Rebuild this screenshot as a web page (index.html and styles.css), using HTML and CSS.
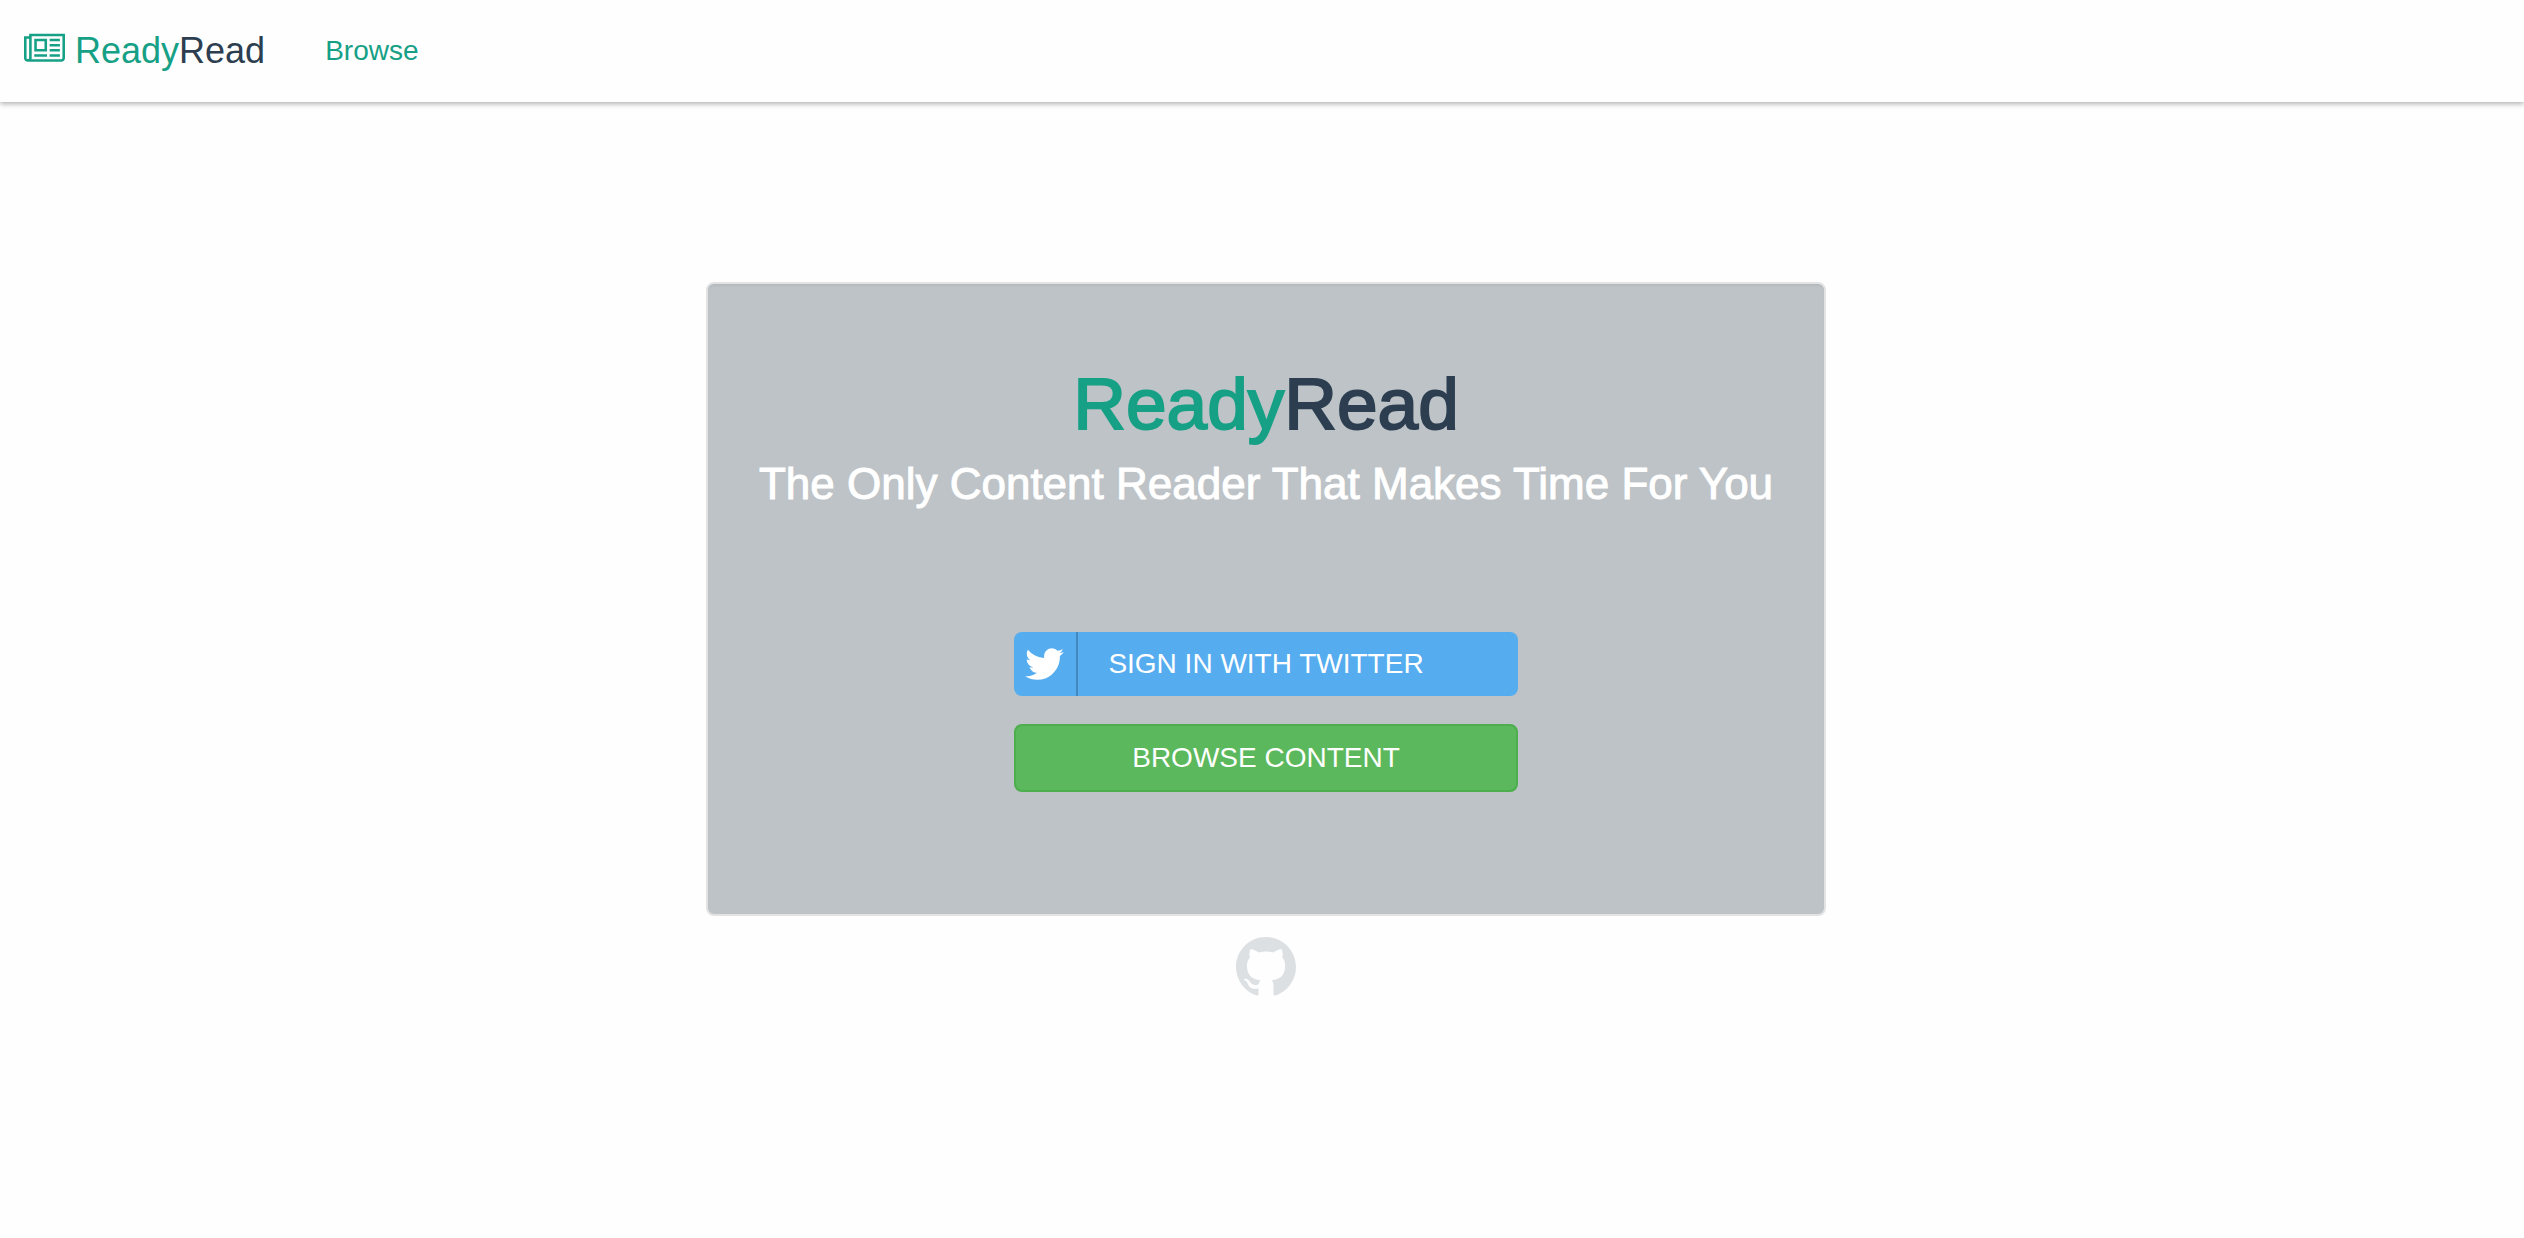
FILE: index.html
```html
<!DOCTYPE html>
<html lang="en">
<head>
<meta charset="utf-8">
<meta name="viewport" content="width=device-width, initial-scale=1">
<title>ReadyRead</title>
<link rel="stylesheet" href="styles.css">
</head>
<body>
<header class="navbar">
  <a class="brand" href="#">
    <svg class="brand-icon" viewBox="0 0 2048 1792" aria-hidden="true"><path d="M1024 512h-384v384h384v-384zM1152 1152v128h-640v-128h640zM1152 384v640h-640v-640h640zM1792 1152v128h-512v-128h512zM1792 896v128h-512v-128h512zM1792 640v128h-512v-128h512zM1792 384v128h-512v-128h512zM256 1344v-960h-128v960q0 26 19 45t45 19 45-19 19-45zM1920 1344v-1088h-1536v1088q0 33-11 64h1483q26 0 45-19t19-45zM2048 128v1216q0 80-56 136t-136 56h-1664q-80 0-136-56t-56-136v-1088h256v-128h1792z"/></svg>
    <span>Ready<span class="dark">Read</span></span>
  </a>
  <nav><a class="nav-link" href="#">Browse</a></nav>
</header>
<main class="page">
  <section class="card">
    <h1 class="title">Ready<span class="dark">Read</span></h1>
    <h2 class="tagline">The Only Content Reader That Makes Time For You</h2>
    <div class="actions">
      <button class="btn btn-twitter" type="button">
        <span class="btn-icon"><svg viewBox="0 0 1664 1792" aria-hidden="true"><path d="M1620 408q-67 98-162 167 1 14 1 42 0 130-38 259.500t-115.500 248.500-184.500 210.500-258 146-323 54.500q-271 0-496-145 35 4 78 4 225 0 401-138-105-2-188-64.500t-114-159.500q33 5 61 5 43 0 85-11-112-23-185.500-111.500t-73.500-205.500v-4q68 38 146 41-66-44-105-115t-39-154q0-88 44-163 121 149 294.500 238.500t371.500 99.500q-8-38-8-74 0-134 94.500-228.500t228.500-94.500q140 0 236 102 109-21 205-78-37 115-142 178 93-10 186-50z"/></svg></span>
        <span>SIGN IN WITH TWITTER</span>
      </button>
      <button class="btn btn-browse" type="button">BROWSE CONTENT</button>
    </div>
  </section>
  <a class="github" href="#" aria-label="GitHub">
    <svg viewBox="0 0 16 16" aria-hidden="true"><path d="M8 0C3.580 0 0 3.580 0 8c0 3.540 2.290 6.530 5.470 7.590.4.070.550-.170.550-.380 0-.190-.010-.820-.010-1.490-2.010.370-2.530-.490-2.690-.940-.090-.230-.480-.940-.820-1.130-.280-.150-.680-.520-.010-.530.630-.010 1.080.580 1.230.820.720 1.210 1.870.870 2.330.660.070-.520.280-.870.510-1.070-1.780-.2-3.640-.890-3.640-3.950 0-.870.310-1.590.820-2.150-.080-.2-.360-1.020.080-2.120 0 0 .670-.210 2.200.820.640-.180 1.320-.270 2-.270s1.360.090 2 .270c1.530-1.040 2.200-.820 2.200-.820.440 1.100.160 1.920.080 2.120.510.560.820 1.270.820 2.150 0 3.070-1.870 3.750-3.650 3.950.290.250.540.730.540 1.480 0 1.070-.010 1.930-.010 2.200 0 .210.150.460.550.380A8.010 8.010 0 0 0 16 8c0-4.420-3.580-8-8-8z"/></svg>
  </a>
</main>
</body>
</html>
```
FILE: styles.css
```css
* { box-sizing: border-box; }

body {
  margin: 0;
  background: #fefefe;
  color: #16a085;
  font-family: "Liberation Sans", Arial, sans-serif;
}

a { color: inherit; text-decoration: none; }
svg { display: block; fill: currentColor; }
.dark { color: #2c3e50; }

.navbar {
  display: flex;
  align-items: center;
  gap: 60px;
  height: 102px;
  padding: 0 24px;
  background: #fefefe;
  box-shadow: 0 2px 5px rgba(0, 0, 0, .3);
}

.brand {
  display: flex;
  align-items: center;
  gap: 10px;
  font-size: 36px;
  line-height: 40px;
}

.brand-icon { width: 41px; height: 36px; margin-bottom: 4px; }
.nav-link { font-size: 28px; line-height: 40px; }

.page {
  display: flex;
  flex-direction: column;
  align-items: center;
  gap: 21px;
  padding: 180px 0 40px 8px;
}

.card {
  width: 1120px;
  max-width: 100%;
  padding: 80px 38px 122px;
  border: 2px solid #e3e3e3;
  border-radius: 8px;
  background: #bdc3c7;
  box-shadow: inset 0 2px 2px rgba(0, 0, 0, .05);
  text-align: center;
}

.title, .tagline { margin: 0; font-weight: 400; }

.title {
  font-size: 73px;
  line-height: 80px;
  -webkit-text-stroke: 2px currentColor;
}

.title .dark { -webkit-text-stroke-color: #2c3e50; }

.tagline {
  margin-top: 16px;
  color: #fff;
  font-size: 44px;
  line-height: 48px;
  -webkit-text-stroke: 1px currentColor;
}

.actions {
  display: flex;
  flex-direction: column;
  gap: 28px;
  max-width: 504px;
  margin: 124px auto 0;
}

.btn {
  border: 0;
  border-radius: 8px;
  color: #fff;
  font: 28px/32px "Liberation Sans", Arial, sans-serif;
  cursor: pointer;
}

.btn-twitter {
  display: grid;
  grid-template-columns: 64px 1fr 64px;
  align-items: center;
  height: 64px;
  padding: 0;
  background: #55acee;
}

.btn-icon {
  display: grid;
  place-items: center;
  height: 64px;
  padding-right: 2px;
  border-right: 2px solid rgba(0, 0, 0, .2);
}

.btn-icon svg { width: 41px; height: 44px; }

.btn-browse {
  height: 68px;
  border: 2px solid #4cae4c;
  background: #5cb85c;
}

.github { color: #dce0e3; }
.github svg { width: 60px; height: 60px; }
```
